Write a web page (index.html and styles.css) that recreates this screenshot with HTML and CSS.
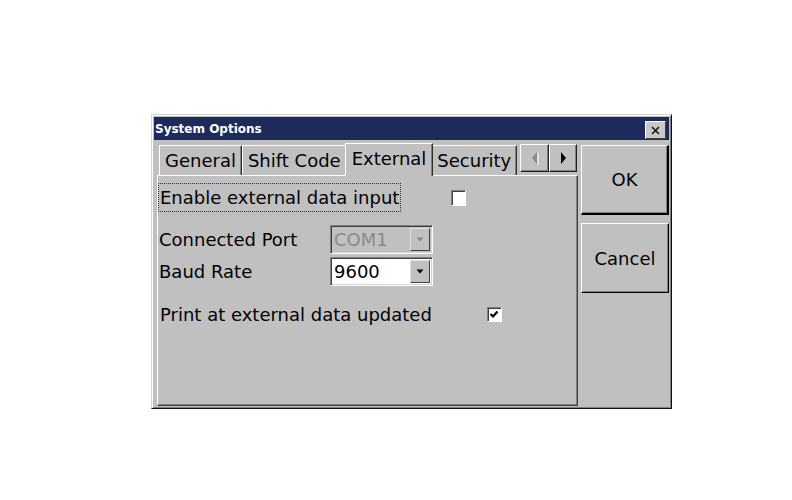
FILE: index.html
```html
<!DOCTYPE html>
<html lang="en">
<head>
  <meta charset="UTF-8">
  <title>System Options</title>
  <link rel="stylesheet" href="styles.css">
</head>
<body>
  <div class="page">
    <div class="window">
      <div class="titlebar">
        <span class="title">System Options</span>
        <button class="close-btn">
          <svg width="9" height="9" viewBox="0 0 9 9"><path d="M1 1 L8 8 M8 1 L1 8" stroke="#111" stroke-width="1.5"/></svg>
        </button>
      </div>
      <div class="main">
        <div class="left-pane">
          <div class="tab-strip">
            <div class="tab">General</div>
            <div class="tab">Shift Code</div>
            <div class="tab active">External</div>
            <div class="tab">Security</div>
            <div class="tab-arrows">
              <div class="arrow-btn">
                <svg width="8" height="14" viewBox="0 0 8 14"><path d="M6 1 L1 7 L6 13 Z" fill="#8a8a8a"/><path d="M7 2 L7 14" stroke="#fff" stroke-width="1"/></svg>
              </div>
              <div class="arrow-btn">
                <svg width="8" height="14" viewBox="0 0 8 14"><path d="M2 1 L7 7 L2 13 Z" fill="#000"/></svg>
              </div>
            </div>
          </div>
          <div class="panel">
            <div class="row first">
              <span class="focus-label">Enable external data input</span>
              <span class="checkbox enable-box"></span>
            </div>
            <div class="row field">
              <span class="field-label">Connected Port</span>
              <div class="combo disabled">
                <span class="combo-text">COM1</span>
                <span class="combo-btn">
                  <svg width="8" height="5" viewBox="0 0 8 5"><path d="M0.5 0.5 L7.5 0.5 L4 4.5 Z" fill="#8a8a8a"/></svg>
                </span>
              </div>
            </div>
            <div class="row field second">
              <span class="field-label">Baud Rate</span>
              <div class="combo">
                <span class="combo-text">9600</span>
                <span class="combo-btn">
                  <svg width="8" height="5" viewBox="0 0 8 5"><path d="M0.5 0.5 L7.5 0.5 L4 4.5 Z" fill="#000"/></svg>
                </span>
              </div>
            </div>
            <div class="row print">
              <span class="print-label">Print at external data updated</span>
              <span class="checkbox print-box">
                <svg width="10" height="9" viewBox="0 0 10 9"><path d="M1.5 4 L4 6.5 L8.5 1.5" fill="none" stroke="#000" stroke-width="2.2"/></svg>
              </span>
            </div>
          </div>
        </div>
        <div class="button-column">
          <button class="dlg-btn ok">OK</button>
          <button class="dlg-btn">Cancel</button>
        </div>
      </div>
    </div>
  </div>
</body>
</html>
```

FILE: styles.css
```css
body {
  margin: 0;
  background: #fff;
  font-family: 'DejaVu Sans', sans-serif;
  color: #000;
}
.page {
  padding: 114px 0 0 151px;
}
.window {
  box-sizing: border-box;
  width: 521px;
  height: 295px;
  padding: 2px;
  background: #c0c0c0;
  border: 1px solid;
  border-color: #d4d4d4 #101010 #101010 #d4d4d4;
  box-shadow: inset 1px 1px #fff, inset -1px -1px #808080;
  display: flex;
  flex-direction: column;
}
.titlebar {
  height: 23px;
  background: #1c2a5c;
  display: flex;
  justify-content: space-between;
  align-items: flex-start;
}
.title {
  color: #fff;
  font-size: 12px;
  font-weight: bold;
  line-height: 24px;
  padding-left: 1px;
}
.close-btn {
  box-sizing: border-box;
  width: 21px;
  height: 18px;
  margin: 4px 3px 0 0;
  padding: 0;
  background: #c8c8c8;
  border: 1px solid;
  border-color: #fff #404040 #404040 #fff;
  display: flex;
  align-items: center;
  justify-content: center;
}
.main {
  flex: 1;
  display: flex;
}
.left-pane {
  width: 424px;
  display: flex;
  flex-direction: column;
}
.tab-strip {
  box-sizing: border-box;
  height: 35px;
  margin-left: 3px;
  padding: 0 1px 0 2px;
  display: flex;
  align-items: flex-end;
}
.tab {
  box-sizing: border-box;
  height: 30px;
  padding: 0 5px;
  font-size: 18px;
  line-height: 29px;
  border-top: 1px solid #fff;
  border-left: 1px solid #fff;
  border-right: 1px solid #303030;
  box-shadow: inset -1px 0 #808080;
  white-space: nowrap;
}
.tab.active {
  position: relative;
  z-index: 1;
  height: 33px;
  margin: 0 -2px -1px;
  padding: 0 6px;
  line-height: 30px;
  background: #c0c0c0;
}
.tab-arrows {
  display: flex;
  margin-left: auto;
  align-self: flex-start;
  margin-top: 4px;
}
.arrow-btn {
  box-sizing: border-box;
  width: 29px;
  height: 28px;
  border: 1px solid;
  border-color: #fff #202020 #202020 #fff;
  box-shadow: inset -1px -1px #808080;
  display: flex;
  align-items: center;
  justify-content: center;
}
.arrow-btn + .arrow-btn {
  width: 28px;
}
.panel {
  flex: 1;
  margin-left: 3px;
  padding-top: 7px;
  border: 1px solid;
  border-color: #fff #404040 #404040 #fff;
  box-shadow: inset -1px -1px #808080;
  font-size: 18px;
}
.row {
  display: flex;
  align-items: center;
}
.focus-label {
  box-sizing: border-box;
  height: 29px;
  line-height: 27px;
  padding: 0 1px;
  border: 1px dotted #333;
}
.checkbox {
  box-sizing: border-box;
  width: 15px;
  height: 15px;
  background: #fff;
  border: 1px solid;
  border-color: #808080 #fff #fff #808080;
  box-shadow: inset 1px 1px #404040;
  display: flex;
  align-items: center;
  justify-content: center;
}
.enable-box {
  margin-left: 50px;
  height: 16px;
}
.field {
  margin-top: 13px;
  padding-left: 1px;
}
.field.second {
  margin-top: 3px;
}
.field-label {
  width: 171px;
}
.combo {
  box-sizing: border-box;
  width: 103px;
  height: 29px;
  background: #fff;
  border: 1px solid;
  border-color: #808080 #fff #fff #808080;
  box-shadow: inset 1px 1px #404040, inset -1px -1px #d4d4d4;
  padding: 2px;
  display: flex;
  align-items: stretch;
}
.combo.disabled {
  background: #c0c0c0;
  color: #8a8a8a;
}
.combo-text {
  flex: 1;
  line-height: 24px;
  padding-left: 1px;
}
.combo-btn {
  box-sizing: border-box;
  width: 20px;
  background: #c0c0c0;
  border: 1px solid;
  border-color: #e0e0e0 #404040 #404040 #e0e0e0;
  display: flex;
  align-items: center;
  justify-content: center;
}
.print {
  margin-top: 14px;
  height: 28px;
  padding-left: 2px;
}
.print-box {
  margin-left: 55px;
}
.button-column {
  flex: 1;
  padding: 5px 0 0 3px;
  display: flex;
  flex-direction: column;
  gap: 8px;
}
.dlg-btn {
  box-sizing: border-box;
  width: 88px;
  height: 70px;
  padding: 0;
  background: #c0c0c0;
  border: 1px solid;
  border-color: #fff #000 #000 #fff;
  box-shadow: inset -1px -1px #808080;
  font-family: 'DejaVu Sans', sans-serif;
  font-size: 18px;
  color: #000;
}
.dlg-btn.ok {
  border-width: 1px 2px 2px 1px;
}
```
